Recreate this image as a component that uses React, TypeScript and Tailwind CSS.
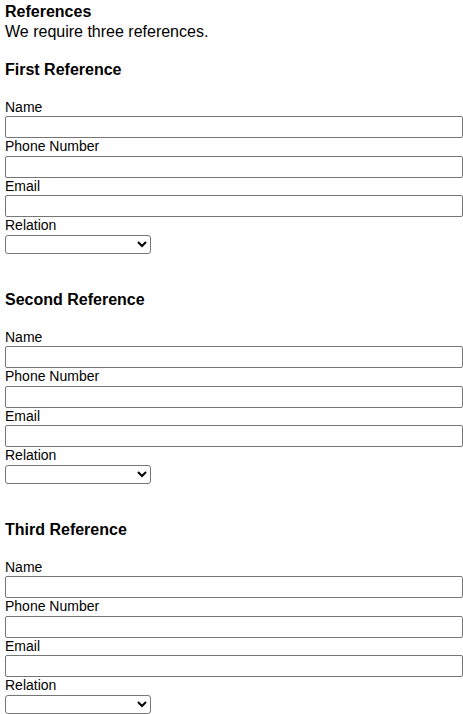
const REFERENCES = ["First Reference", "Second Reference", "Third Reference"];

const FIELDS = ["Name", "Phone Number", "Email"];

function ReferenceSection({ title }: { title: string }) {
  return (
    <section className="mb-[35.5px]">
      <h3 className="mb-[18.5px] pt-[1px] text-[16px] font-bold leading-[20px]">
        {title}
      </h3>
      {FIELDS.map((field) => (
        <div key={field}>
          <label className="block text-[14px] leading-[17.5px]">{field}</label>
          <input
            type="text"
            className="block h-[22px] w-[458px] rounded-[2px] border border-[#767676] bg-white px-[2px]"
          />
        </div>
      ))}
      <div>
        <label className="block text-[14px] leading-[17.5px]">Relation</label>
        <select className="block h-[19px] w-[146px] rounded-[3px] border border-[#767676] bg-white text-[13px]">
          <option value=""></option>
          <option value="friend">Friend</option>
          <option value="colleague">Colleague</option>
          <option value="family">Family</option>
        </select>
      </div>
    </section>
  );
}

export default function App() {
  return (
    <div className="min-h-[714px] bg-white pl-[5px] pt-[2px] font-['Liberation_Sans',Arial,sans-serif] text-black">
      <h2 className="text-[16px] font-bold leading-[20px]">References</h2>
      <p className="mb-[17px] text-[16px] leading-[20px]">
        We require three references.
      </p>
      {REFERENCES.map((title) => (
        <ReferenceSection key={title} title={title} />
      ))}
    </div>
  );
}
